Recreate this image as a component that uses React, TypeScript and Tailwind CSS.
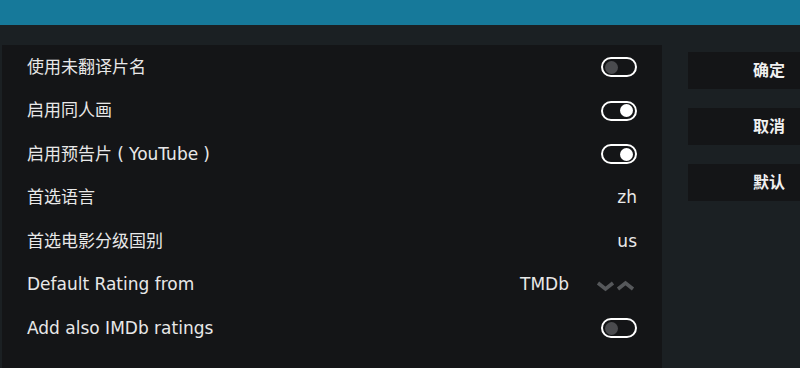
const font = { fontFamily: '"DejaVu Sans", "Noto Sans CJK SC", sans-serif' };

function Toggle({ on }: { on: boolean }) {
  return (
    <div className="flex h-[20px] w-[36px] items-center rounded-full border-2 border-white px-[2px]">
      {on ? (
        <div className="ml-auto h-[13px] w-[13px] rounded-full bg-white" />
      ) : (
        <div className="h-[13px] w-[13px] rounded-full bg-[#4a4b4e]" />
      )}
    </div>
  );
}

function Spinner() {
  return (
    <svg width="41" height="12" viewBox="0 0 41 12" className="mt-[2px]">
      <polyline points="2,3 9.5,9 17,3" fill="none" stroke="#56585b" strokeWidth="3.6" strokeLinejoin="miter" />
      <polyline points="22,9 29.5,3 37,9" fill="none" stroke="#56585b" strokeWidth="3.6" strokeLinejoin="miter" />
    </svg>
  );
}

// fullwidth bracket, glyph centred in its em box
function Paren({ ch }: { ch: string }) {
  return <span className="inline-block w-[17px] text-center">{ch}</span>;
}

type Row = { label: React.ReactNode; key: string; toggle?: boolean; value?: string; spinner?: boolean };

const rows: Row[] = [
  { key: "a", label: "使用未翻译片名", toggle: false },
  { key: "b", label: "启用同人画", toggle: true },
  {
    key: "c",
    label: (
      <>
        启用预告片<Paren ch="(" />YouTube<Paren ch=")" />
      </>
    ),
    toggle: true,
  },
  { key: "d", label: "首选语言", value: "zh" },
  { key: "e", label: "首选电影分级国别", value: "us" },
  { key: "f", label: "Default Rating from", value: "TMDb", spinner: true },
  { key: "g", label: "Add also IMDb ratings", toggle: false },
];

export default function App() {
  return (
    <div className="flex h-[368px] w-[800px] flex-col overflow-hidden bg-[#1b2023]" style={font}>
      <div className="h-[25px] shrink-0 bg-[#16799a]" />
      <div className="flex flex-1 pt-[20px]">
        <div className="ml-[2px] w-[660px] shrink-0 bg-[#141517]">
          {rows.map((r) => (
            <div key={r.key} className="flex h-[43.5px] items-center pl-[25px] pr-[25px] pt-[1px] text-[17px] text-[#e8e8e8]">
              <span className="flex-1">{r.label}</span>
              {r.toggle !== undefined && <Toggle on={r.toggle} />}
              {r.value && !r.spinner && <span>{r.value}</span>}
              {r.spinner && (
                <div className="flex items-center gap-[27px]">
                  <span>{r.value}</span>
                  <Spinner />
                </div>
              )}
            </div>
          ))}
        </div>
        <div className="ml-[26px] flex flex-1 flex-col gap-[19px] pt-[7px]">
          {["确定", "取消", "默认"].map((b) => (
            <div
              key={b}
              className="flex h-[37px] items-center justify-end pr-[15px] text-[16px] font-bold text-[#f0f0f0] bg-[#141517]"
            >
              {b}
            </div>
          ))}
        </div>
      </div>
    </div>
  );
}
